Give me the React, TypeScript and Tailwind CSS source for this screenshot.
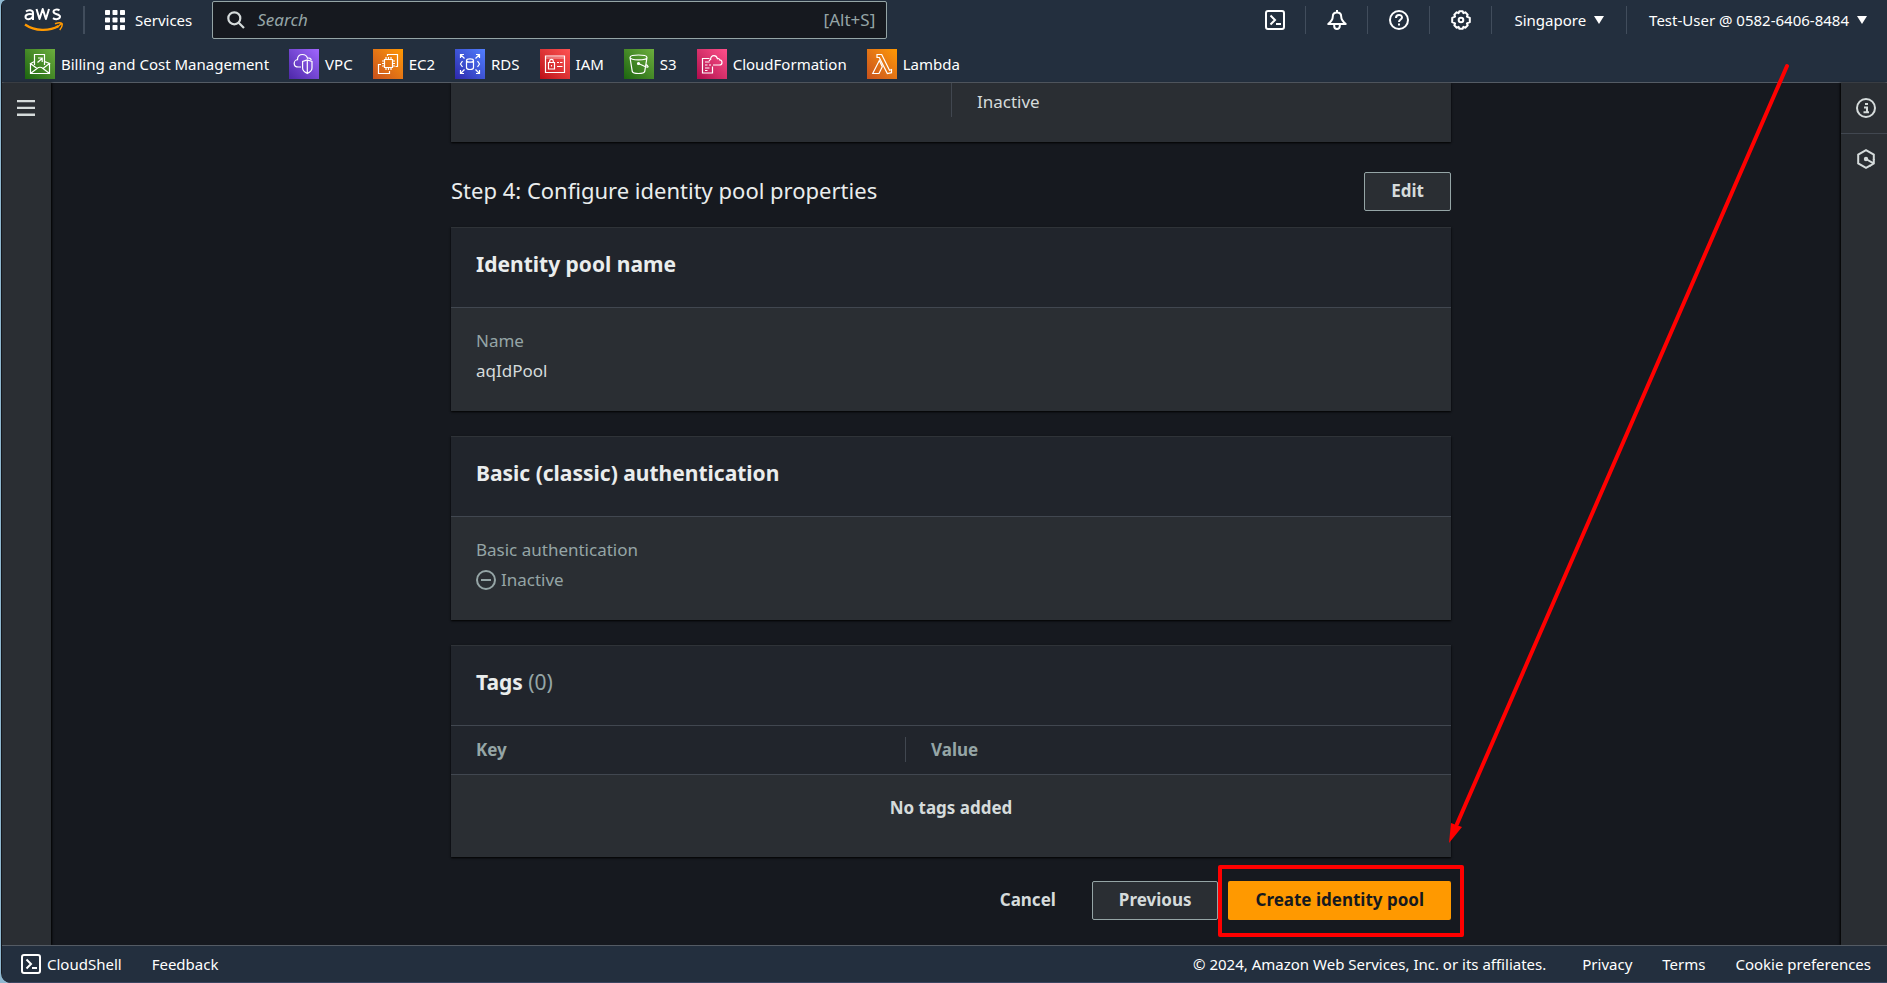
import type { ReactNode } from "react";

function Tile({ grad, children }: { grad: string; children: ReactNode }) {
  return (
    <svg className={"size-[30px] shrink-0 " + grad} viewBox="0 0 30 30" fill="none" stroke="#fff" strokeWidth="1.2" aria-hidden="true">
      {children}
    </svg>
  );
}

const green = "bg-linear-to-tr from-[#1b660f] to-[#6cae3e]";
const orange = "bg-linear-to-tr from-[#c8511b] to-[#ff9900]";

const favorites = [
  {
    label: "Billing and Cost Management",
    icon: (
      <Tile grad={green}>
        <path d="M9.500 16V5.500h10V16M5.500 14.500v10h19v-10M9.500 12.500l-4 2 6.500 5M19.500 12.500l5 2-6.500 5M5.500 24.500l6.500-5q3-2.500 6 0l6.500 5M12.500 13.500l4.500-4M13 9h4.200v4" />
      </Tile>
    ),
  },
  {
    label: "VPC",
    icon: (
      <Tile grad="bg-linear-to-tr from-[#4d27a8] to-[#a166ff]">
        <path d="M12 18H9.500c-3 0-4.300-1.600-4.300-3.600s1.700-3.600 3.300-3.700C8.500 7.500 10.500 5.500 13.500 5.500c2.500 0 4.200 1.300 5 3.700 2-.6 3.500.4 3.800 2M18.300 11l4.700 1.500v6.500c0 2.500-2 4.200-4.700 5.500-2.700-1.300-4.700-3-4.700-5.500v-6.500zM18.300 11v13" />
      </Tile>
    ),
  },
  {
    label: "EC2",
    icon: (
      <Tile grad={orange}>
        <path d="M11.500 10.500h8v8h-8zM13 10.500V8M15.500 10.500V8M18 10.500V8M13 21v-2.500M15.500 21v-2.500M18 21v-2.500M11.500 12H9M11.500 14.500H9M11.500 17H9M22 12h-2.500M22 14.500h-2.500M22 17h-2.500M14.500 7V5.500h10v12h-2M8 15.500H5.500v9h11V22" />
      </Tile>
    ),
  },
  {
    label: "RDS",
    icon: (
      <Tile grad="bg-linear-to-tr from-[#2e27ad] to-[#527fff]">
        <path d="M11.500 11.500v7c0 1.200 1.500 2 3.500 2s3.500-.8 3.500-2v-7M15 9.800c2 0 3.500.7 3.500 1.700s-1.500 1.700-3.500 1.700-3.500-.7-3.500-1.700 1.500-1.700 3.500-1.700zM5.500 9V5.500H9M5.500 5.500l4 4M21 5.500h3.500V9M24.500 5.500l-4 4M5.500 21v3.500H9M5.500 24.500l4-4M21 24.500h3.500V21M24.500 24.500l-4-4M7.500 12l-2 3 2 3M22.500 12l2 3-2 3" />
      </Tile>
    ),
  },
  {
    label: "IAM",
    icon: (
      <Tile grad="bg-linear-to-tr from-[#bd0816] to-[#ff5252]">
        <path d="M5.500 7h19v16.500h-19zM8.500 13.500h6V20h-6zM9.700 13.500V12c0-2.300 3.600-2.300 3.600 0v1.500M11.500 16v1.500M17 13.500h2M20 13.500h2.500M17 17.500h5.500" />
        <path d="M5.500 9h19" strokeWidth="0.600" />
      </Tile>
    ),
  },
  {
    label: "S3",
    icon: (
      <Tile grad={green}>
        <path d="M14.500 6c5 0 8.500 1 8.500 2.500s-3.500 2.400-8.500 2.400S6 10 6 8.500 9.500 6 14.500 6zM6 8.500l2.300 14c.4 1.300 3 2 6.200 2s5.800-.7 6.200-2L23 8.500M14.500 14.500l7 3.200c2 .8 3.200.5 2.300-.7-.5-.7-1-1-1.800-1.500" />
        <circle cx="14.500" cy="14.500" r="1" fill="#fff" />
      </Tile>
    ),
  },
  {
    label: "CloudFormation",
    icon: (
      <Tile grad="bg-linear-to-tr from-[#b0084d] to-[#ff4f8b]">
        <path d="M12.500 9.500h-7v14.500h10v-6.500M8 13h4.500M8 16h2.500M12 16h2M8 19h4.500M8 21.500h2.500M16 16h6.300c1.700 0 2.700-1 2.700-2.600s-1-2.300-2.300-2.500c-.2-1.200-1.200-1.700-2.200-1.200-.6-1.800-1.700-3-3.500-3-2.300 0-3.600 1.700-3.400 3.800-.7.300-1.200.8-1.500 1.500" />
      </Tile>
    ),
  },
  {
    label: "Lambda",
    icon: (
      <Tile grad={orange}>
        <path d="M5.700 24.500l6.600-13 3 6.200-3.300 6.800zM10 5.500h4.700l7.800 15.700 2-.7v3.200l-4.200.8-8-16H10z" />
      </Tile>
    ),
  },
];

function ShellIcon() {
  return (
    <svg className="size-5" viewBox="0 0 20 20" fill="none" stroke="currentColor" strokeWidth="2" aria-hidden="true">
      <rect x="1" y="1" width="18" height="18" rx="2" />
      <path d="M5.500 5.500l4.500 4.500-4.500 4.500M11 14h5" />
    </svg>
  );
}

function BellIcon() {
  return (
    <svg className="size-5" viewBox="0 0 20 20" fill="none" stroke="currentColor" strokeWidth="2" strokeLinejoin="round" aria-hidden="true">
      <path d="M10 2.500c-2.800 0-4.200 1.800-4.200 4 0 3.200-1.300 4.800-4.500 7.500h17.400c-3.200-2.700-4.500-4.300-4.500-7.500 0-2.200-1.400-4-4.200-4zM10 0v3M7.200 14.500v1.500c0 4 5.600 4 5.600 0v-1.500" />
    </svg>
  );
}

function HelpIcon() {
  return (
    <svg className="size-5" viewBox="0 0 20 20" fill="none" stroke="currentColor" strokeWidth="2" aria-hidden="true">
      <circle cx="10" cy="10" r="9" />
      <path d="M7 8c0-4 6-4 6-.5 0 2-3 2-3 4.500M10 13.500v2" />
    </svg>
  );
}

function GearIcon() {
  return (
    <svg className="size-5" viewBox="0 0 20 20" fill="none" stroke="currentColor" strokeWidth="2" strokeLinejoin="round" aria-hidden="true">
      <path d="M8.400 1.200h3.200l.8 1.900 1.900-.8 2.400 2.400-.8 1.900 2.900 1.200v4.400l-2.900 1.200.8 1.900-2.400 2.400-1.900-.8-.8 1.900H8.400l-.8-1.900-1.900.8-2.400-2.400.8-1.900-2.900-1.200V7.800l2.900-1.200-.8-1.900 2.400-2.400 1.900.8z" />
      <circle cx="10" cy="10" r="2.300" />
    </svg>
  );
}

function Divider() {
  return <span className="h-7 w-px bg-[#414d5c]" />;
}

function Caret() {
  return (
    <svg className="h-2 w-[10px]" viewBox="0 0 10 8" fill="currentColor" aria-hidden="true">
      <path d="M0 0h10L5 8z" />
    </svg>
  );
}

function Header() {
  return (
    <header className="border-b border-[#545b64] bg-[#232f3e] text-[15px] text-white">
      <div className="flex h-[42px] items-start">
        <a href="#home" aria-label="AWS" className="ml-[21px] mt-[6px]">
          <svg className="h-[27px] w-10" viewBox="0 0 40 27" fill="none" aria-hidden="true">
            <g stroke="#fff" strokeWidth="2" strokeLinejoin="round">
              <path d="M3 5.500c2-1.800 7-2 7 1.500v7M10 8.500c-3-1-7.500-.5-7.500 2.400 0 3.500 6 3 7.500-.7" />
              <path d="M13.500 3l3 10 3.200-10 3.200 10L26 3" />
              <path d="M36.500 4.300c-2-1.300-6-1-6 1.500 0 3 6.500 1.800 6.500 4.800 0 3-4.700 3.200-7 1.500" />
            </g>
            <path d="M2 18.500c10 7 24.500 7 33.500 1.500" stroke="#ff9900" strokeWidth="2.200" />
            <path d="M32 17.800c2.500-1 6-1.300 7-.3.500 1.500-.5 4.500-2.300 6.500M38.500 17.500l-4.500 4" stroke="#ff9900" strokeWidth="1.500" />
          </svg>
        </a>
        <span className="ml-5 mt-[6px] h-7 w-0.5 bg-[#414d5c]" />
        <button type="button" className="ml-5 flex h-10 items-center gap-[10px]">
          <svg className="size-5" viewBox="0 0 20 20" fill="#fff" aria-hidden="true">
            {[0, 7.5, 15].map((y) => [0, 7.5, 15].map((x) => <rect key={x + "-" + y} x={x} y={y} width="5" height="5" rx="0.800" />))}
          </svg>
          Services
        </button>
        <label className="ml-5 mt-px flex h-[38px] w-[675px] items-center rounded-xs border border-[#95a5a6] bg-[#16191f] pr-[11px] pl-[14px] text-[17px] text-[#95a5a6]">
          <svg className="size-[18px] shrink-0" viewBox="0 0 18 18" fill="none" stroke="#d5dbdb" strokeWidth="2.200" aria-hidden="true">
            <circle cx="7.300" cy="7.300" r="6" />
            <path d="M11.500 11.500l5.500 5.500" />
          </svg>
          <input type="search" aria-label="Search" placeholder="Search" className="ml-3 min-w-0 flex-1 bg-transparent outline-none placeholder:text-[#95a5a6] placeholder:italic" />
          <span>[Alt+S]</span>
        </label>
        <div className="ml-auto flex h-10 items-center">
          <button type="button" aria-label="CloudShell" className="pr-5 pl-[21px]"><ShellIcon /></button>
          <Divider />
          <button type="button" aria-label="Notifications" className="pr-5 pl-[21px]"><BellIcon /></button>
          <Divider />
          <button type="button" aria-label="Help" className="pr-5 pl-[21px]"><HelpIcon /></button>
          <Divider />
          <button type="button" aria-label="Settings" className="pr-5 pl-[21px]"><GearIcon /></button>
          <Divider />
          <button type="button" className="flex items-center gap-2 px-[22px]">Singapore <Caret /></button>
          <Divider />
          <button type="button" className="flex items-center gap-2 pr-5 pl-[22px]">Test-User @ 0582-6406-8484 <Caret /></button>
        </div>
      </div>
      <nav aria-label="Favorites" className="flex h-10 items-center gap-5 pt-1 pl-[23px]">
        {favorites.map((f) => (
          <a key={f.label} href="#service" className="flex items-center gap-[6px]">
            {f.icon}
            {f.label}
          </a>
        ))}
      </nav>
    </header>
  );
}

function Card({ title, children }: { title: ReactNode; children: ReactNode }) {
  return (
    <section className="border-t border-[#2f3338] bg-[#2a2e33] shadow-[0_1px_2px_#000000]">
      <h2 className="flex h-20 items-center border-b border-[#414750] bg-[#21252c] px-[25px] pb-[6px] text-[21px] font-bold text-[#eaeded]">
        {title}
      </h2>
      {children}
    </section>
  );
}

function Field({ label, children }: { label: string; children: ReactNode }) {
  return (
    <dl className="px-[25px] pt-[18px] pb-[25px] leading-[30px]">
      <dt className="text-[#95a5a6]">{label}</dt>
      <dd className="flex items-center gap-[5px]">{children}</dd>
    </dl>
  );
}

const button = "h-[39px] rounded-xs border border-[#95a5a6] bg-[#2a2e33] px-[26px] pb-0.5 font-bold";

export default function App() {
  return (
    <div className="relative flex min-h-screen bg-[#8fb8d0] pl-px font-['Noto_Sans',sans-serif]">
      <div className="flex min-w-0 flex-1 flex-col overflow-hidden rounded-bl-[10px] rounded-tl-[6px] bg-[#16191f] pl-px">
        <Header />
        <div className="flex flex-1">
          <aside className="w-[49px] shrink-0 bg-[#2a2e33] pt-[17px] pl-[15px] shadow-[1px_0_2px_#000000]">
            <button type="button" aria-label="Open navigation" className="block">
              <svg className="h-4 w-[18px]" viewBox="0 0 18 16" fill="#d5dbdb" aria-hidden="true">
                <path d="M0 0h18v2.300H0zM0 6.800h18v2.300H0zM0 13.600h18V16H0z" />
              </svg>
            </button>
          </aside>
          <main className="min-w-0 flex-1 pr-5 pl-[30px] text-[17px] text-[#d5dbdb]">
            <div className="mx-auto max-w-[1000px]">
              <div className="grid h-[59px] grid-cols-2 items-start bg-[#2a2e33] shadow-[0_1px_2px_#000000]">
                <span />
                <div className="h-[34px] border-l border-[#414750] pt-[7px] pl-[25px] leading-6">Inactive</div>
              </div>
              <div className="mt-[30px] mb-4 flex items-center justify-between">
                <h1 className="pb-0.5 text-[22px] text-[#eaeded]">Step 4: Configure identity pool properties</h1>
                <button type="button" className={button}>Edit</button>
              </div>
              <div className="flex flex-col gap-[25px]">
                <Card title="Identity pool name">
                  <Field label="Name">aqIdPool</Field>
                </Card>
                <Card title="Basic (classic) authentication">
                  <Field label="Basic authentication">
                    <svg className="size-5 text-[#95a5a6]" viewBox="0 0 20 20" fill="none" stroke="currentColor" strokeWidth="2" aria-hidden="true">
                      <circle cx="10" cy="10" r="9" />
                      <path d="M5 10h10" />
                    </svg>
                    <span className="text-[#95a5a6]">Inactive</span>
                  </Field>
                </Card>
                <Card title={<>Tags&nbsp;<span className="font-normal text-[#95a5a6]">(0)</span></>}>
                  <table className="w-full table-fixed text-left">
                    <thead>
                      <tr className="h-12 border-b border-[#414750] bg-[#21252c] text-[#95a5a6]">
                        <th className="w-[454px] px-[25px] py-0">Key</th>
                        <th className="p-0"><div className="border-l border-[#414750] pl-[25px] leading-[25px]">Value</div></th>
                      </tr>
                    </thead>
                    <tbody>
                      <tr>
                        <td colSpan={2} className="h-[83px] pb-4 text-center font-bold">No tags added</td>
                      </tr>
                    </tbody>
                  </table>
                </Card>
              </div>
              <div className="mt-6 mb-6 flex justify-end gap-[10px]">
                <button type="button" className="h-[39px] px-[26px] pb-0.5 font-bold">Cancel</button>
                <button type="button" className={button}>Previous</button>
                <div className="relative">
                  <button type="button" className="h-[39px] rounded-xs bg-[#ff9900] px-[27px] pb-0.5 font-bold text-[#16191f]">Create identity pool</button>
                  <span className="pointer-events-none absolute -top-4 -right-[13px] -bottom-[17px] -left-[10px] rounded-xs border-4 border-[#ff0000]" />
                </div>
              </div>
            </div>
          </main>
          <aside className="w-[46px] shrink-0 bg-[#2a2e33] text-[#d5dbdb] shadow-[-1px_0_2px_#000000]">
            <button type="button" aria-label="Info" className="flex h-[51px] w-full items-center justify-center border-b border-[#414750] pl-1">
              <svg className="size-5" viewBox="0 0 20 20" fill="none" stroke="currentColor" strokeWidth="2" aria-hidden="true">
                <circle cx="10" cy="10" r="9" />
                <path d="M9 6h3M8 9.500h3v5M7.500 14.200h5.500" />
              </svg>
            </button>
            <button type="button" aria-label="Diagnostics" className="flex h-[50px] w-full items-center justify-center pl-1">
              <svg className="size-5" viewBox="0 0 20 20" fill="none" stroke="currentColor" strokeWidth="2" aria-hidden="true">
                <path d="M17.800 11V5.600L10 1.200 2.200 5.600v8.800l7.800 4.400 4.500-2.500" />
                <circle cx="10" cy="10" r="2.200" fill="currentColor" stroke="none" />
                <path d="M10 10l7.500 4.300M17.800 10v4.500l-4 2.300" />
              </svg>
            </button>
          </aside>
        </div>
        <footer className="flex h-[38px] items-center border-y border-t-[#545b64] border-b-[#3a4560] bg-[#232f3e] pr-4 pl-[19px] text-[15px] text-white">
          <button type="button" className="flex items-center gap-[6px]"><ShellIcon /> CloudShell</button>
          <a href="#feedback" className="ml-[30px]">Feedback</a>
          <span className="ml-auto">© 2024, Amazon Web Services, Inc. or its affiliates.</span>
          <a href="#privacy" className="ml-9">Privacy</a>
          <a href="#terms" className="ml-[30px]">Terms</a>
          <a href="#cookies" className="ml-[30px]">Cookie preferences</a>
        </footer>
      </div>
      <svg className="pointer-events-none absolute top-[60px] right-[90px] h-[790px] w-[350px]" viewBox="0 0 350 790" aria-hidden="true">
        <path d="M340 6L10 764" stroke="#ff0000" strokeWidth="4" strokeLinecap="round" />
        <path d="M2 783L4 763 15 767z" fill="#ff0000" />
      </svg>
    </div>
  );
}
